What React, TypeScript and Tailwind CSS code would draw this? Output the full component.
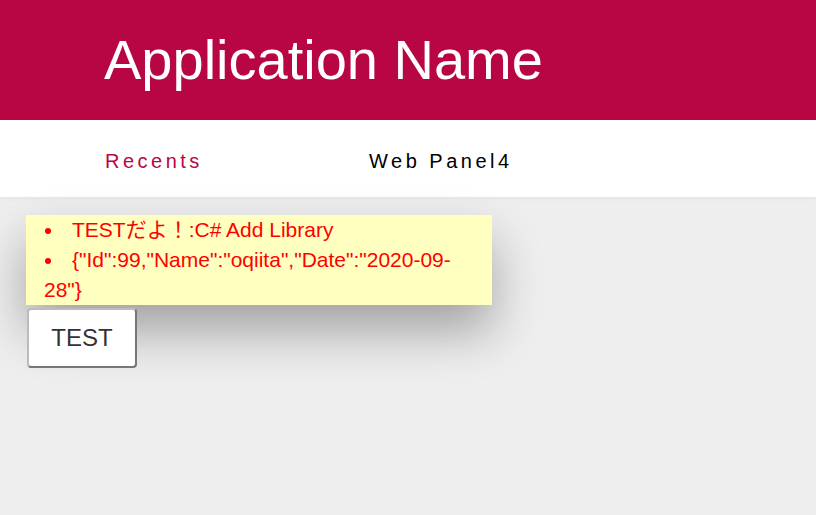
export default function App() {
  const items = ['TESTだよ！:C# Add Library', '{"Id":99,"Name":"oqiita","Date":"2020-09-28"}']

  return (
    <div className="min-h-[515px] bg-[#eeeeee] font-['Liberation_Sans','Noto_Sans_CJK_JP',sans-serif]">
      {/* App bar */}
      <header className="h-[120px] bg-[#b80645] pl-[104px] pt-[25px]">
        <h1 className="text-[56px] leading-[70px] text-white">Application Name</h1>
      </header>

      {/* Tabs */}
      <nav className="flex h-[77px] items-center bg-white pl-[105px] shadow-[0_2px_4px_rgba(0,0,0,0.04)]">
        <span className="w-[264px] pt-[4px] text-[20px] tracking-[3.5px] text-[#b80645]">Recents</span>
        <span className="pt-[4px] text-[20px] tracking-[3.5px] text-black">Web Panel4</span>
      </nav>

      <main className="pl-[26px] pt-[18px]">
        <ul className="w-[466px] bg-[#ffffc0] pl-[18px] pr-[20px] text-[21px] leading-[30px] text-[#ff0000] shadow-[0_26px_50px_rgba(0,0,0,0.32)]">
          {items.map(t => (
            <li key={t}>
              <span className="inline-block w-[28px] pl-[1px] align-middle">
                <span className="block h-[6px] w-[6px] rounded-full bg-[#ff0000]" />
              </span>
              {t}
            </li>
          ))}
        </ul>
        <button className="mt-[3px] ml-[1px] h-[60px] w-[110px] rounded-[4px] border-2 border-[#bbbbbb] border-r-[#777777] border-b-[#777777] bg-white text-[24px] text-[#333333]">
          TEST
        </button>
      </main>
    </div>
  )
}
